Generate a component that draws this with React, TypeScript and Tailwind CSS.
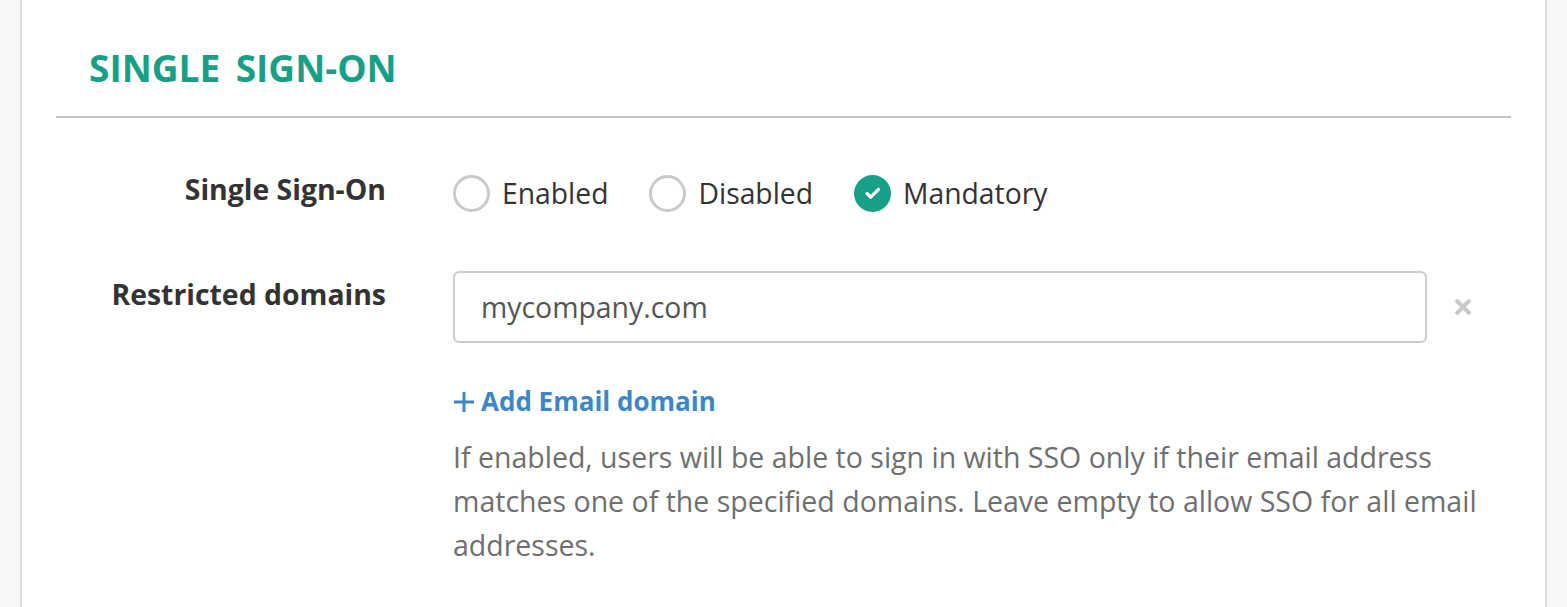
import { useState } from "react";

type Option = "Enabled" | "Disabled" | "Mandatory";

function Radio({
  label,
  checked,
  onSelect,
}: {
  label: Option;
  checked: boolean;
  onSelect: () => void;
}) {
  return (
    <button type="button" onClick={onSelect} className="flex items-center gap-[12px]">
      {checked ? (
        <span className="flex h-[37px] w-[37px] items-center justify-center rounded-full bg-[#17a085]">
          <svg width="22" height="22" viewBox="0 0 24 24" fill="none">
            <path d="M5.5 12.5l4 4L18 8" stroke="white" strokeWidth="3.6" strokeLinecap="round" strokeLinejoin="round" />
          </svg>
        </span>
      ) : (
        <span className="h-[37px] w-[37px] rounded-full border-[3px] border-[#c7cbce] bg-white" />
      )}
      <span className="text-[28.3px] leading-[38px] text-[#333333]">{label}</span>
    </button>
  );
}

export default function App() {
  const [mode, setMode] = useState<Option>("Mandatory");
  const options: Option[] = ["Enabled", "Disabled", "Mandatory"];

  return (
    <div
      className="flex h-[607px] w-full bg-[#f7f7f9] px-[20px]"
      style={{ fontFamily: "'Open Sans', sans-serif" }}
    >
      <div className="flex-1 border-x-2 border-[#dcdcdf] bg-white px-[34px]">
        <h1 className="pl-[33px] pt-[44px] pb-[24px] text-[37px] font-bold uppercase leading-[48px] [word-spacing:6px] text-[#17a085]">
          Single Sign-On
        </h1>
        <div className="h-[2px] bg-[#c3c6c9]" />

        <div className="flex pt-[56px]">
          <div className="w-[330px] shrink-0 -mt-[4px] text-right text-[28.4px] font-bold leading-[38px] text-[#333333]">
            Single Sign-On
          </div>
          <div className="ml-[67px] flex items-center gap-[41px]">
            {options.map((o) => (
              <Radio key={o} label={o} checked={mode === o} onSelect={() => setMode(o)} />
            ))}
          </div>
        </div>

        <div className="flex pt-[59px]">
          <div className="w-[330px] shrink-0 pt-[4px] text-right text-[28.4px] font-bold leading-[38px] text-[#333333]">
            Restricted domains
          </div>
          <div className="ml-[67px] flex-1">
            <div className="flex items-center">
              <input
                defaultValue="mycompany.com"
                className="h-[72px] w-[974px] rounded-[6px] border-2 border-[#cccccc] px-[26px] text-[28.4px] text-[#555555] outline-none"
              />
              <button type="button" className="ml-[26px] text-[#c8c8c8]">
                <svg width="20" height="20" viewBox="0 0 20 20">
                  <path d="M3 3L17 17M17 3L3 17" stroke="currentColor" strokeWidth="4" />
                </svg>
              </button>
            </div>
            <button type="button" className="mt-[39px] flex items-center gap-[6px] text-[26px] font-bold text-[#3d87c9]">
              <svg width="22" height="22" viewBox="0 0 22 22">
                <path d="M11 1V21M1 11H21" stroke="currentColor" strokeWidth="3" />
              </svg>
              Add Email domain
            </button>
            <p className="mt-[14px] w-[1040px] text-[28.5px] leading-[44px] text-[#6f6f6f]">
              If enabled, users will be able to sign in with SSO only if their email address matches one of the specified domains. Leave empty to allow SSO for all email addresses.
            </p>
          </div>
        </div>
      </div>
    </div>
  );
}
